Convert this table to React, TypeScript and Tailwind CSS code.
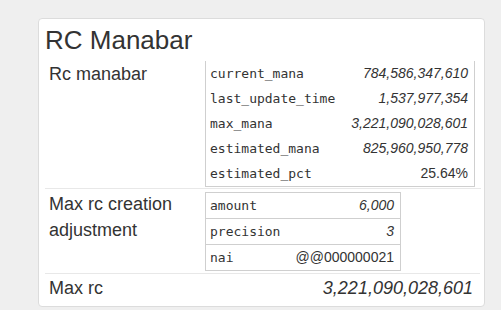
const manabar = [
	{ key: 'current_mana', value: '784,586,347,610', num: true },
	{ key: 'last_update_time', value: '1,537,977,354', num: true },
	{ key: 'max_mana', value: '3,221,090,028,601', num: true },
	{ key: 'estimated_mana', value: '825,960,950,778', num: true },
	{ key: 'estimated_pct', value: '25.64%', num: false },
];

const adjustment = [
	{ key: 'amount', value: '6,000', num: true },
	{ key: 'precision', value: '3', num: true },
	{ key: 'nai', value: '@@000000021', num: false },
];

const mono = { fontFamily: '"DejaVu Sans Mono", monospace' };

const App = () => {
	return (
		<div className="w-[501px] h-[310px] bg-[#efefef] pt-[18px] pl-[38px] font-['Liberation_Sans',Arial,sans-serif] text-[#333]">
			<div className="w-[447px] h-[289px] bg-white border border-[#dcdcdc] rounded-[4px] pl-[6px] pr-[3px]">
				<h2 className="text-[26px] leading-[32px] pt-[5px] pb-[2px]">RC Manabar</h2>

				{/* rc manabar row */}
				<div className="flex pt-[2px] pb-[1px] mt-[1px]">
					<div className="w-[160px] pl-[4px] text-[18px] leading-[26px]">Rc manabar</div>
					<div className="w-[270px] border-x border-b border-[#cfcfcf]">
						{manabar.map((row) => (
							<div key={row.key} className="flex justify-between items-center h-[25px] pl-[4px] pr-[6px]">
								<span className="text-[13px] text-[#333]" style={mono}>
									{row.key}
								</span>
								<span className={row.num ? 'text-[14px] italic' : 'text-[14px]'}>{row.value}</span>
							</div>
						))}
					</div>
				</div>

				{/* max rc creation adjustment row */}
				<div className="flex border-t border-[#e8e8e8] pt-[2px] pb-[2px]">
					<div className="w-[160px] pl-[4px] text-[18px] leading-[26px]">
						Max rc creation
						<br />
						adjustment
					</div>
					<div className="w-[196px] border border-[#cfcfcf] mt-[1px]">
						{adjustment.map((row, i) => (
							<div
								key={row.key}
								className={
									i > 0
										? 'flex justify-between items-center h-[26px] pl-[4px] pr-[6px] border-t border-[#cfcfcf]'
										: 'flex justify-between items-center h-[25px] pl-[4px] pr-[6px]'
								}>
								<span className="text-[13px]" style={mono}>
									{row.key}
								</span>
								<span className={row.num ? 'text-[14px] italic' : 'text-[14px]'}>{row.value}</span>
							</div>
						))}
					</div>
				</div>

				{/* max rc row */}
				<div className="flex justify-between border-t border-[#e8e8e8] pt-[1px] w-[435px]">
					<div className="pl-[4px] text-[18px] leading-[26px]">Max rc</div>
					<div className="pr-[7px] text-[18px] leading-[26px] italic">3,221,090,028,601</div>
				</div>
			</div>
		</div>
	);
};

export default App;
